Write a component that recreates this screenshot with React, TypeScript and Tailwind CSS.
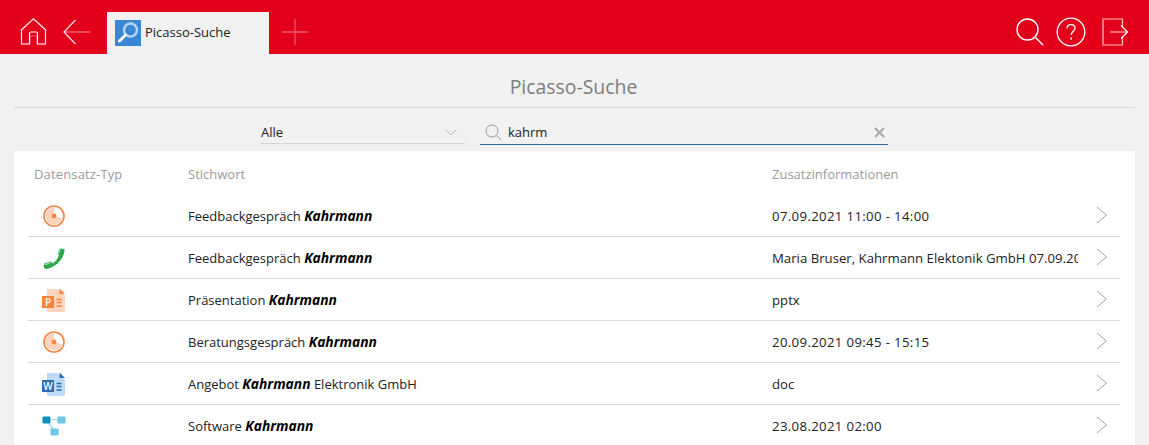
import React from "react";

const F = "[font-family:'Open_Sans','Noto_Sans',sans-serif]";

function Home() {
  return (
    <svg width="27" height="27" viewBox="0 0 27 27" fill="none" stroke="#fff" strokeWidth="1.2">
      <path d="M0.8 12.5 L13.5 0.8 L26.2 12.5" strokeOpacity="0.95" />
      <path d="M1.5 12 V26 H9.5 V15.5 Q9.5 14 11 14 H16 Q17.5 14 17.5 15.5 V26 H25.5 V12" />
      <path d="M10 26 V18 H17 V26" strokeOpacity="0.35" />
    </svg>
  );
}

function Back() {
  return (
    <svg width="28" height="26" viewBox="0 0 28 26" fill="none" stroke="#fff" strokeWidth="1.2">
      <path d="M12.5 1 L1 13 L12.5 25" strokeOpacity="0.9" />
      <path d="M1.5 13 H27.5" strokeOpacity="0.45" />
    </svg>
  );
}

function Plus() {
  return (
    <svg width="26" height="26" viewBox="0 0 26 26" fill="none" stroke="#fff" strokeOpacity="0.35" strokeWidth="1.3">
      <path d="M13 0 V26 M0 13 H26" />
    </svg>
  );
}

function HeaderSearch() {
  return (
    <svg width="28" height="28" viewBox="0 0 28 28" fill="none" stroke="#fff" strokeWidth="1.4">
      <circle cx="11.5" cy="11.5" r="10.5" />
      <path d="M19.5 19.5 L27 27" />
    </svg>
  );
}

function Help() {
  return (
    <svg width="30" height="30" viewBox="0 0 30 30" fill="none" stroke="#fff" strokeWidth="1.3">
      <circle cx="15" cy="15" r="13.8" />
      <path d="M11 11.5 C11 8.8 13 7.6 15 7.6 C17.2 7.6 19 9 19 11.2 C19 14 15.2 14.5 15.2 18" />
      <path d="M15.2 20.5 V22.5" strokeWidth="1.6" />
    </svg>
  );
}

function Logout() {
  return (
    <svg width="26" height="28" viewBox="0 0 26 28" fill="none" stroke="#fff" strokeWidth="1.2">
      <path d="M20.5 9 V1 H1 V27 H20.5 V19" strokeOpacity="0.75" />
      <path d="M8 14 H25" strokeOpacity="0.7" />
      <path d="M19 7.5 L25.5 14 L19 20.5" />
    </svg>
  );
}

function TabIcon() {
  return (
    <div className="w-[26px] h-[26px] bg-[#3a87d6] shrink-0">
      <svg width="26" height="26" viewBox="0 0 26 26" fill="none">
        <circle cx="15.5" cy="10" r="6.5" stroke="#b6d6f4" strokeWidth="2.4" />
        <path d="M10.5 15 L4.5 21" stroke="#fff" strokeWidth="3" strokeLinecap="round" />
      </svg>
    </div>
  );
}

function Appointment() {
  return (
    <svg width="24" height="24" viewBox="0 0 24 24" fill="none">
      <circle cx="12" cy="12" r="10" fill="#fff" stroke="#f58442" strokeWidth="1.6" />
      <path d="M12 3.6 A8.4 8.4 0 1 0 20.2 14 L12 12 Z" fill="#fbd3bb" />
      <circle cx="12" cy="12" r="2.4" fill="#f58442" />
    </svg>
  );
}

function Phone() {
  return (
    <svg width="24" height="24" viewBox="0 0 24 24" fill="none">
      <path d="M22.5 3 C23 11 15 21 4.5 23 C2.5 23 1.5 21.5 1.5 20 L2.5 17.6 L9 15.2 L10.3 17.4 C13.5 16 16 12.5 17 8.8 L15.6 7.5 L17.4 2.4 Z" fill="#2ba84a" />
      <path d="M18 3 L16.6 7.4" stroke="#b8e3c4" strokeWidth="1.2" />
      <path d="M3 19 L8.6 16.2" stroke="#b8e3c4" strokeWidth="1.2" />
    </svg>
  );
}

function Doc({ light, dark, letter }: { light: string; dark: string; letter: string }) {
  return (
    <div className="relative w-[24px] h-[24px]">
      <svg width="24" height="24" viewBox="0 0 24 24" fill="none">
        <path d="M5 1 H15.5 L23 8 V22 Q23 24 21 24 H7 Q5 24 5 22 Z" fill={light} />
        <path d="M17.5 0.5 L23 6 H17.5 Z" fill={dark} />
        <path d="M14.5 11.5 H19.5 M14.5 14.5 H19.5 M14.5 18 H19.5" stroke={dark} strokeWidth="1.3" />
        <rect x="0" y="8" width="12" height="12" fill={dark} />
      </svg>
      <span className={`${F} absolute left-0 top-[8px] w-[12px] h-[12px] flex items-center justify-center text-white text-[10px] leading-none font-semibold`}>
        {letter}
      </span>
    </div>
  );
}

function Flow() {
  return (
    <svg width="24" height="24" viewBox="0 0 24 24" fill="none">
      <path d="M10 5.5 H15.5 M6.5 9 L11 15" stroke="#a8dcec" strokeWidth="1.6" />
      <rect x="0.5" y="2.5" width="8" height="7" rx="1" fill="#0d8fb9" />
      <rect x="15.5" y="2.5" width="8" height="7" rx="1" fill="#6cc7e2" />
      <rect x="8.5" y="14.5" width="8" height="7" rx="1" fill="#6cc7e2" />
    </svg>
  );
}

function Chevron() {
  return (
    <svg width="12" height="18" viewBox="0 0 12 18" fill="none" stroke="#a3a3a3" strokeWidth="1">
      <path d="M1 1 L10.5 9 L1 17" />
    </svg>
  );
}

const K = ({ children = "Kahrmann" }: { children?: string }) => (
  <b className="italic font-bold text-black text-[13.8px]">{children}</b>
);

const rows: { icon: React.ReactNode; key: React.ReactNode; info: string; date?: boolean }[] = [
  { icon: <Appointment />, key: <>Feedbackgespräch <K /></>, info: "07.09.2021 11:00 - 14:00", date: true },
  { icon: <Phone />, key: <>Feedbackgespräch <K /></>, info: "Maria Bruser, Kahrmann Elektonik GmbH 07.09.2021 11:00" },
  { icon: <Doc light="#fdd5bd" dark="#f5833e" letter="P" />, key: <>Präsentation <K /></>, info: "pptx" },
  { icon: <Appointment />, key: <>Beratungsgespräch <K /></>, info: "20.09.2021 09:45 - 15:15", date: true },
  { icon: <Doc light="#bfdaf5" dark="#2b6cb3" letter="W" />, key: <>Angebot <K /> Elektronik GmbH</>, info: "doc" },
  { icon: <Flow />, key: <>Software <K /></>, info: "23.08.2021 02:00", date: true },
];

export default function App() {
  return (
    <div className={`${F} h-[445px] w-[1149px] overflow-hidden bg-[#f1f1f1] flex flex-col text-[13px] text-[#222]`}>
      <header className="h-[54px] shrink-0 bg-[#e2001a] flex items-end">
        <div className="w-[107px] h-full flex items-center pt-[9px] pl-[20px] gap-[16px]">
          <Home />
          <Back />
        </div>
        <div className="w-[162px] h-[42px] bg-[#f1f1f1] flex items-center pl-[8px] gap-[4px]">
          <TabIcon />
          <span className="text-[13px] text-[#222]">Picasso-Suche</span>
        </div>
        <div className="h-full flex items-center pt-[10px] pl-[13px]">
          <Plus />
        </div>
        <div className="ml-auto h-full flex items-center pt-[10px] pr-[21px]">
          <HeaderSearch />
          <div className="ml-[12px]">
            <Help />
          </div>
          <div className="ml-[16px]">
            <Logout />
          </div>
        </div>
      </header>

      <div className="mx-[14px] h-[54px] shrink-0 border-b border-[#d6d6d6] flex items-center justify-center pr-[2px]">
        <h1 className="text-[19.4px] font-normal text-[#7d7d7d] leading-none mt-[13px]">Picasso-Suche</h1>
      </div>

      <div className="h-[43px] shrink-0 flex items-start pt-[13px] pl-[261px]">
        <div className="w-[204px] h-[23px] border-b border-[#d4d4d4] flex items-center justify-between pr-[8px] pt-[1px]">
          <span className="text-[13px] text-[#222]">Alle</span>
          <svg width="12" height="7" viewBox="0 0 12 7" fill="none" stroke="#b5b5b5" strokeWidth="1">
            <path d="M0.5 0.5 L6 6 L11.5 0.5" />
          </svg>
        </div>
        <div className="ml-[15px] w-[408px] h-[24px] border-b border-[#2f6aa8] flex items-center pl-[5px] pr-[3px]">
          <svg width="17" height="17" viewBox="0 0 17 17" fill="none" stroke="#9a9a9a" strokeWidth="1">
            <circle cx="7" cy="7" r="6" />
            <path d="M11.5 11.5 L16 16" />
          </svg>
          <span className="ml-[6px] text-[13px] text-[#222]">kahrm</span>
          <svg className="ml-auto" width="11" height="11" viewBox="0 0 11 11" fill="none" stroke="#a8a8a8" strokeWidth="2">
            <path d="M1 1 L10 10 M10 1 L1 10" />
          </svg>
        </div>
      </div>

      <main className="mx-[14px] flex-1 bg-white pl-[14px] pr-[15px]">
        <div className="grid grid-cols-[160px_584px_306px_1fr] h-[44px] items-center text-[13px] text-[#9b9b9b] pt-[3px]">
          <span className="pl-[6px] tracking-[0.15px]">Datensatz-Typ</span>
          <span>Stichwort</span>
          <span>Zusatzinformationen</span>
          <span />
        </div>
        {rows.map((r, i) => (
          <div key={i} className="grid grid-cols-[160px_584px_306px_1fr] h-[42px] items-center border-b border-[#d9d9d9] text-[13px] text-[#222]">
            <div className="pl-[14px] flex items-center">{r.icon}</div>
            <div className="whitespace-nowrap pt-[2px]">{r.key}</div>
            <div className={r.date ? "whitespace-nowrap overflow-hidden pt-[2px] text-[13.2px] tracking-[0.35px]" : "whitespace-nowrap overflow-hidden pt-[2px] text-[13.2px]"}>{r.info}</div>
            <div className="flex justify-end pr-[12px] pb-[2px]">
              <Chevron />
            </div>
          </div>
        ))}
      </main>
    </div>
  );
}
